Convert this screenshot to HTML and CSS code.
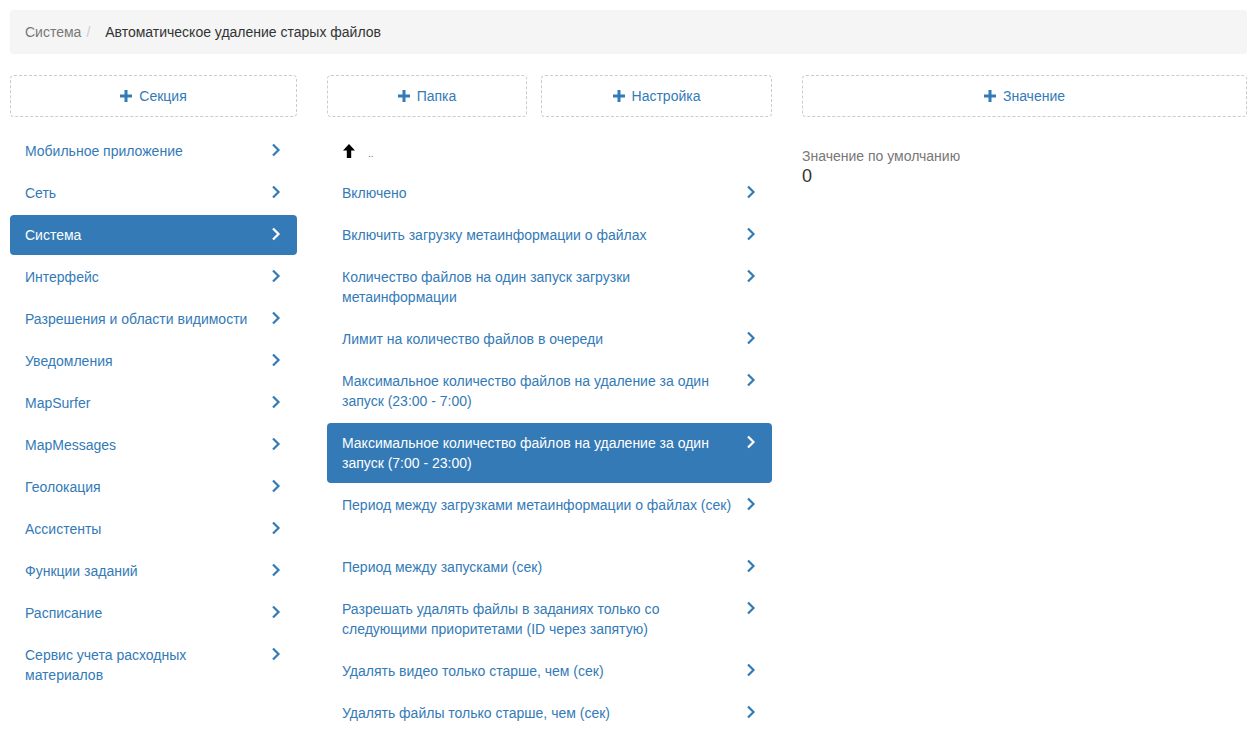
FILE: index.html
```html
<!DOCTYPE html>
<html lang="ru">
  <head>
    <meta charset="UTF-8" />
    <meta name="viewport" content="width=device-width, initial-scale=1.0" />
    <title>Настройки</title>
    <link rel="stylesheet" href="styles.css">
  </head>
  <body>
    <ol class="breadcrumb">
      <li><a href="#">Система</a></li>
      <li class="current">Автоматическое удаление старых файлов</li>
    </ol>

    <div class="columns">
      <!-- sections -->
      <div class="col">
        <a class="add-btn" href="#">
          <svg class="plus" viewBox="0 0 12 12"><path d="M4.5 0h3v4.5H12v3H7.5V12h-3V7.5H0v-3h4.5z"/></svg>
          Секция
        </a>
        <ul class="pills">
          <li><a href="#"><span class="text">Мобильное приложение</span><svg class="chev" viewBox="0 0 14 14"><path d="M4 1.5l5.5 5.5L4 12.5"/></svg></a></li>
          <li><a href="#"><span class="text">Сеть</span><svg class="chev" viewBox="0 0 14 14"><path d="M4 1.5l5.5 5.5L4 12.5"/></svg></a></li>
          <li class="active"><a href="#"><span class="text">Система</span><svg class="chev" viewBox="0 0 14 14"><path d="M4 1.5l5.5 5.5L4 12.5"/></svg></a></li>
          <li><a href="#"><span class="text">Интерфейс</span><svg class="chev" viewBox="0 0 14 14"><path d="M4 1.5l5.5 5.5L4 12.5"/></svg></a></li>
          <li><a href="#"><span class="text">Разрешения и области видимости</span><svg class="chev" viewBox="0 0 14 14"><path d="M4 1.5l5.5 5.5L4 12.5"/></svg></a></li>
          <li><a href="#"><span class="text">Уведомления</span><svg class="chev" viewBox="0 0 14 14"><path d="M4 1.5l5.5 5.5L4 12.5"/></svg></a></li>
          <li><a href="#"><span class="text">MapSurfer</span><svg class="chev" viewBox="0 0 14 14"><path d="M4 1.5l5.5 5.5L4 12.5"/></svg></a></li>
          <li><a href="#"><span class="text">MapMessages</span><svg class="chev" viewBox="0 0 14 14"><path d="M4 1.5l5.5 5.5L4 12.5"/></svg></a></li>
          <li><a href="#"><span class="text">Геолокация</span><svg class="chev" viewBox="0 0 14 14"><path d="M4 1.5l5.5 5.5L4 12.5"/></svg></a></li>
          <li><a href="#"><span class="text">Ассистенты</span><svg class="chev" viewBox="0 0 14 14"><path d="M4 1.5l5.5 5.5L4 12.5"/></svg></a></li>
          <li><a href="#"><span class="text">Функции заданий</span><svg class="chev" viewBox="0 0 14 14"><path d="M4 1.5l5.5 5.5L4 12.5"/></svg></a></li>
          <li><a href="#"><span class="text">Расписание</span><svg class="chev" viewBox="0 0 14 14"><path d="M4 1.5l5.5 5.5L4 12.5"/></svg></a></li>
          <li><a href="#"><span class="text">Сервис учета расходных материалов</span><svg class="chev" viewBox="0 0 14 14"><path d="M4 1.5l5.5 5.5L4 12.5"/></svg></a></li>
        </ul>
      </div>

      <!-- settings -->
      <div class="col">
        <div class="btn-row">
          <a class="add-btn" href="#">
            <svg class="plus" viewBox="0 0 12 12"><path d="M4.5 0h3v4.5H12v3H7.5V12h-3V7.5H0v-3h4.5z"/></svg>
            Папка
          </a>
          <a class="add-btn" href="#">
            <svg class="plus" viewBox="0 0 12 12"><path d="M4.5 0h3v4.5H12v3H7.5V12h-3V7.5H0v-3h4.5z"/></svg>
            Настройка
          </a>
        </div>
        <ul class="pills">
          <li class="up"><a href="#"><svg class="arrow-up" viewBox="0 0 12 14"><path d="M6 0L0 6.5h3.8V14h4.4V6.5H12z"/></svg><span class="dots">..</span></a></li>
          <li><a href="#"><span class="text">Включено</span><svg class="chev" viewBox="0 0 14 14"><path d="M4 1.5l5.5 5.5L4 12.5"/></svg></a></li>
          <li><a href="#"><span class="text">Включить загрузку метаинформации о файлах</span><svg class="chev" viewBox="0 0 14 14"><path d="M4 1.5l5.5 5.5L4 12.5"/></svg></a></li>
          <li><a href="#"><span class="text">Количество файлов на один запуск загрузки метаинформации</span><svg class="chev" viewBox="0 0 14 14"><path d="M4 1.5l5.5 5.5L4 12.5"/></svg></a></li>
          <li><a href="#"><span class="text">Лимит на количество файлов в очереди</span><svg class="chev" viewBox="0 0 14 14"><path d="M4 1.5l5.5 5.5L4 12.5"/></svg></a></li>
          <li><a href="#"><span class="text">Максимальное количество файлов на удаление за один запуск (23:00 - 7:00)</span><svg class="chev" viewBox="0 0 14 14"><path d="M4 1.5l5.5 5.5L4 12.5"/></svg></a></li>
          <li class="active"><a href="#"><span class="text">Максимальное количество файлов на удаление за один запуск (7:00 - 23:00)</span><svg class="chev" viewBox="0 0 14 14"><path d="M4 1.5l5.5 5.5L4 12.5"/></svg></a></li>
          <li class="tall"><a href="#"><span class="text">Период между загрузками метаинформации о файлах (сек)</span><svg class="chev" viewBox="0 0 14 14"><path d="M4 1.5l5.5 5.5L4 12.5"/></svg></a></li>
          <li><a href="#"><span class="text">Период между запусками (сек)</span><svg class="chev" viewBox="0 0 14 14"><path d="M4 1.5l5.5 5.5L4 12.5"/></svg></a></li>
          <li><a href="#"><span class="text">Разрешать удалять файлы в заданиях только со следующими приоритетами (ID через запятую)</span><svg class="chev" viewBox="0 0 14 14"><path d="M4 1.5l5.5 5.5L4 12.5"/></svg></a></li>
          <li><a href="#"><span class="text">Удалять видео только старше, чем (сек)</span><svg class="chev" viewBox="0 0 14 14"><path d="M4 1.5l5.5 5.5L4 12.5"/></svg></a></li>
          <li><a href="#"><span class="text">Удалять файлы только старше, чем (сек)</span><svg class="chev" viewBox="0 0 14 14"><path d="M4 1.5l5.5 5.5L4 12.5"/></svg></a></li>
        </ul>
      </div>

      <!-- values -->
      <div class="col">
        <a class="add-btn" href="#">
          <svg class="plus" viewBox="0 0 12 12"><path d="M4.5 0h3v4.5H12v3H7.5V12h-3V7.5H0v-3h4.5z"/></svg>
          Значение
        </a>
        <div class="value">
          <div class="label">Значение по умолчанию</div>
          <div class="num">0</div>
        </div>
      </div>
    </div>
  </body>
</html>
```

FILE: styles.css
```css
body {
  margin: 0;
  padding: 10px 9px 10px 10px;
  font-family: "Liberation Sans", Arial, sans-serif;
  font-size: 14px;
  line-height: 20px;
  color: #333;
  background-color: #fff;
}
a {
  color: #337ab7;
  text-decoration: none;
}
.breadcrumb {
  display: flex;
  margin: 0 0 21px;
  padding: 12px 15px;
  list-style: none;
  background-color: #f5f5f5;
  border-radius: 4px;
}
.breadcrumb a {
  color: #777;
}
.breadcrumb li + li::before {
  content: "/\00a0";
  padding: 0 11px 0 5px;
  color: #ccc;
}
.breadcrumb .current {
  color: #333;
}
.columns {
  display: grid;
  grid-template-columns: 287px 445px 445px;
  column-gap: 30px;
  align-items: start;
}
.btn-row {
  display: grid;
  grid-template-columns: 200px 1fr;
  column-gap: 14px;
}
.add-btn {
  display: flex;
  align-items: center;
  justify-content: center;
  height: 42px;
  box-sizing: border-box;
  border: 1px dashed #ccc;
  border-radius: 4px;
  margin-bottom: 14px;
}
.plus {
  width: 12px;
  height: 12px;
  margin-right: 7px;
  fill: #337ab7;
}
.pills {
  margin: 0;
  padding: 0;
  list-style: none;
}
.pills li + li {
  margin-top: 2px;
}
.pills a {
  display: flex;
  align-items: flex-start;
  padding: 10px 14px 10px 15px;
  border-radius: 4px;
}
.pills .text {
  flex: 1;
  margin-right: 4px;
}
.chev {
  flex: none;
  width: 14px;
  height: 14px;
  margin-top: 2px;
  fill: none;
  stroke: #337ab7;
  stroke-width: 2.2;
}
.pills .active a {
  background-color: #337ab7;
  color: #fff;
}
.pills .active .chev {
  stroke: #fff;
}
.pills .tall a {
  padding-bottom: 30px;
}
.pills .up a {
  height: 20px;
  align-items: center;
}
.arrow-up {
  width: 12px;
  height: 14px;
  margin-left: 1px;
  fill: #000;
}
.dots {
  margin-left: 13px;
  padding-top: 6px;
  font-size: 10px;
  line-height: 14px;
  color: #777;
}
.value {
  padding-top: 15px;
}
.value .label {
  color: #777;
}
.value .num {
  font-size: 18px;
  line-height: 20px;
  color: #333;
}
```
